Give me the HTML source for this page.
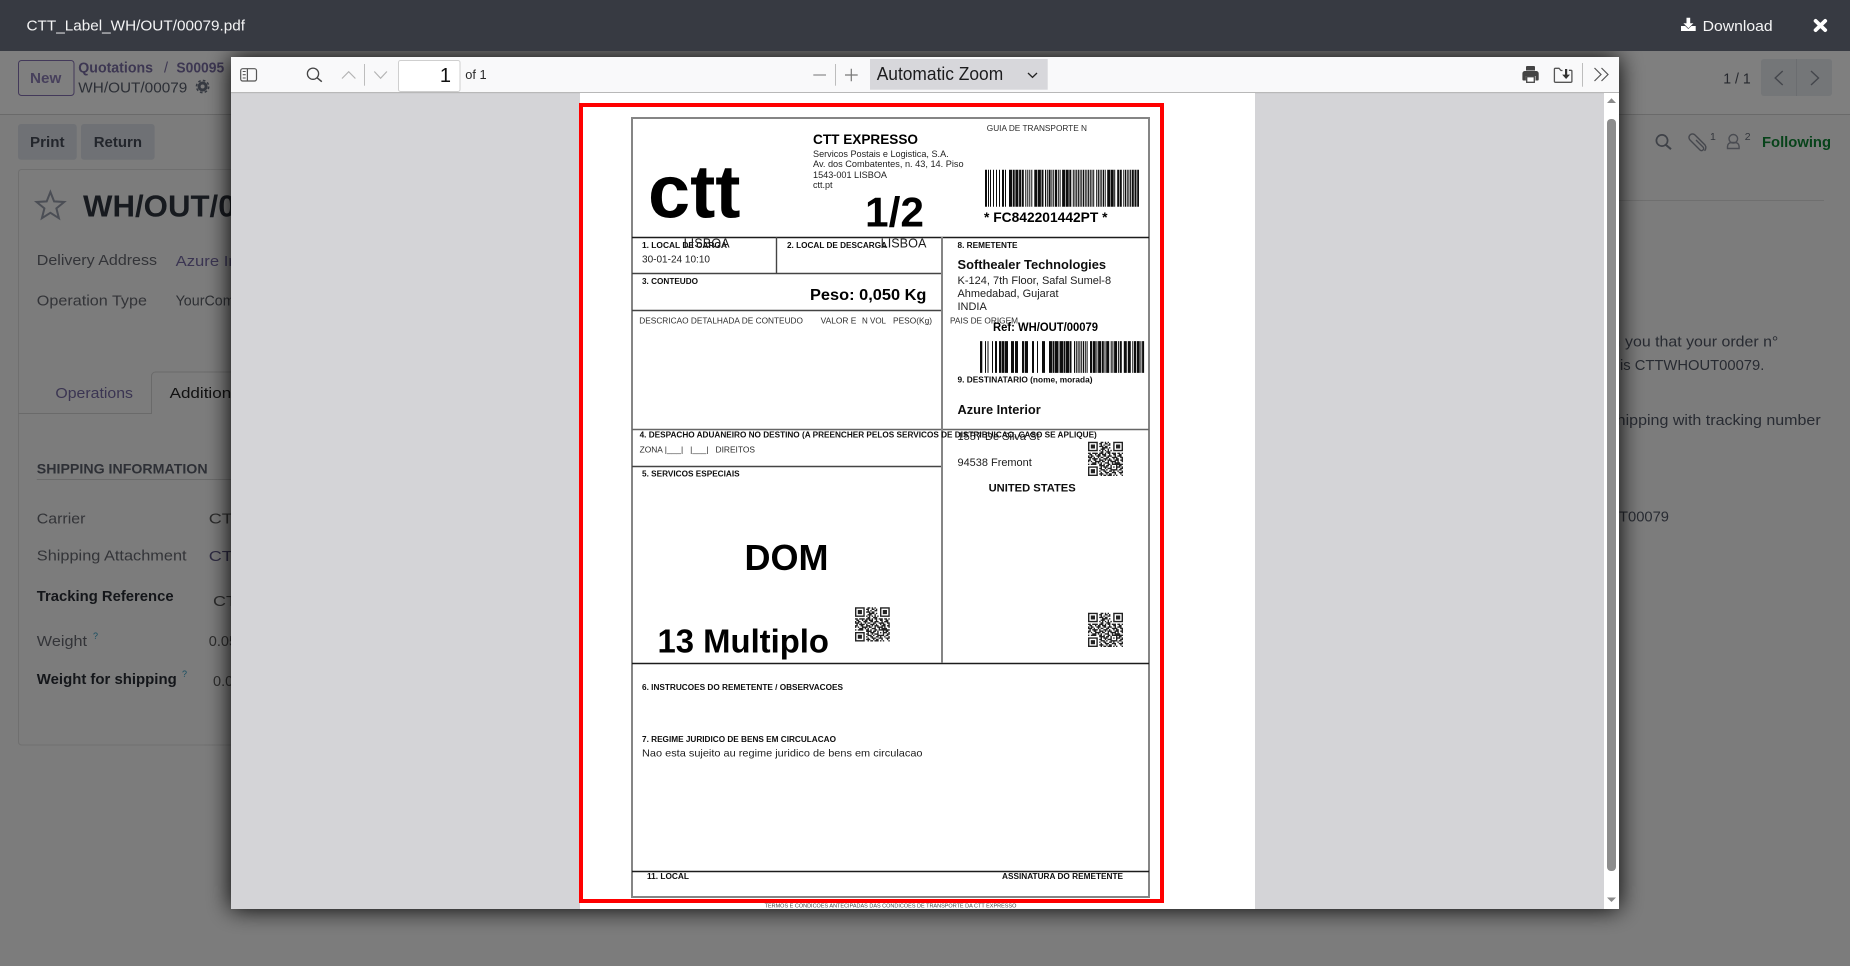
<!DOCTYPE html>
<html><head><meta charset="utf-8"><title>CTT_Label_WH/OUT/00079.pdf</title>
<style>
html,body{margin:0;padding:0;background:#7c7c7c;width:1850px;height:966px;overflow:hidden}
svg{display:block;position:absolute;left:0;top:0}
text{font-family:"Liberation Sans",sans-serif;white-space:pre}
.b{font-weight:700}
.bg{font-size:14.5px;fill:#333438}
.l{font-size:8px;font-weight:700;fill:#111}
.r8{font-size:8px;fill:#2c2c2c}
.r{fill:#1f1f1f}
</style></head><body>
<svg width="1850" height="966" viewBox="0 0 1850 966" xmlns="http://www.w3.org/2000/svg">
<defs>
<filter id="sh" filterUnits="userSpaceOnUse" x="150" y="0" width="1550" height="966"><feGaussianBlur stdDeviation="12"/></filter>
<filter id="sb" x="-5%" y="-5%" width="110%" height="110%"><feGaussianBlur stdDeviation="0.25"/></filter>
<path id="qr" fill="none" stroke="#222" stroke-width="1" d="M0 .5h7M9 .5h2M12 .5h1M14 .5h1M18 .5h7M0 1.5h1M6 1.5h1M8 1.5h2M12 1.5h2M15 1.5h1M18 1.5h1M24 1.5h1M0 2.5h1M2 2.5h3M6 2.5h1M9 2.5h1M11 2.5h1M14 2.5h2M18 2.5h1M20 2.5h3M24 2.5h1M0 3.5h1M2 3.5h3M6 3.5h1M8 3.5h3M12 3.5h2M18 3.5h1M20 3.5h3M24 3.5h1M0 4.5h1M2 4.5h3M6 4.5h1M10 4.5h4M15 4.5h1M18 4.5h1M20 4.5h3M24 4.5h1M0 5.5h1M6 5.5h1M9 5.5h3M14 5.5h1M18 5.5h1M24 5.5h1M0 6.5h7M8 6.5h1M10 6.5h1M12 6.5h1M14 6.5h1M16 6.5h1M18 6.5h7M9 7.5h2M13 7.5h3M0 8.5h2M3 8.5h4M8 8.5h3M12 8.5h1M14 8.5h2M17 8.5h3M21 8.5h2M24 8.5h1M1 9.5h2M5 9.5h1M7 9.5h2M10 9.5h3M15 9.5h1M18 9.5h2M22 9.5h2M0 10.5h1M2 10.5h2M6 10.5h3M11 10.5h2M14 10.5h3M19 10.5h1M21 10.5h3M0 11.5h3M4 11.5h1M7 11.5h1M9 11.5h2M13 11.5h2M17 11.5h4M23 11.5h2M1 12.5h1M3 12.5h3M6 12.5h1M8 12.5h1M11 12.5h3M15 12.5h1M18 12.5h1M20 12.5h2M24 12.5h1M0 13.5h2M4 13.5h2M8 13.5h3M12 13.5h1M14 13.5h3M19 13.5h3M23 13.5h2M0 14.5h1M2 14.5h1M5 14.5h4M10 14.5h2M14 14.5h1M16 14.5h4M21 14.5h1M24 14.5h1M3 15.5h3M7 15.5h1M9 15.5h1M12 15.5h3M17 15.5h1M19 15.5h4M0 16.5h1M2 16.5h4M8 16.5h2M11 16.5h1M14 16.5h2M17 16.5h8M8 17.5h4M13 17.5h2M16 17.5h1M20 17.5h1M22 17.5h2M0 18.5h7M9 18.5h1M11 18.5h3M16 18.5h1M18 18.5h1M20 18.5h3M24 18.5h1M0 19.5h1M6 19.5h1M8 19.5h2M12 19.5h1M14 19.5h3M20 19.5h1M23 19.5h2M0 20.5h1M2 20.5h3M6 20.5h1M9 20.5h3M13 20.5h1M16 20.5h5M22 20.5h2M0 21.5h1M2 21.5h3M6 21.5h1M8 21.5h1M11 21.5h2M15 21.5h2M18 21.5h1M21 21.5h1M24 21.5h1M0 22.5h1M2 22.5h3M6 22.5h1M9 22.5h1M12 22.5h3M17 22.5h3M22 22.5h3M0 23.5h1M6 23.5h1M8 23.5h3M13 23.5h1M15 23.5h2M19 23.5h1M23 23.5h1M0 24.5h7M9 24.5h1M11 24.5h2M14 24.5h3M18 24.5h1M20 24.5h1M24 24.5h1"/>
</defs>

<!-- background app -->
<rect width="1850" height="966" fill="#7c7c7c"/>
<rect y="51" width="1850" height="63" fill="#7f7f7f"/>
<rect y="114" width="1850" height="1" fill="#6a6a6a"/>
<rect x="18.5" y="60.5" width="55.5" height="35" rx="3" fill="none" stroke="#43395a"/>
<text class="b" x="30" y="83" font-size="15" fill="#47405c" textLength="31.3" lengthAdjust="spacingAndGlyphs">New</text>
<text class="b" x="78.3" y="72.3" font-size="14.5" fill="#3d3752" textLength="74.7" lengthAdjust="spacingAndGlyphs">Quotations</text>
<text x="164" y="72.3" font-size="14.5" fill="#3d3752">/</text>
<text class="b" x="176.4" y="72.3" font-size="14.5" fill="#3d3752" textLength="47.8" lengthAdjust="spacingAndGlyphs">S00095</text>
<text x="78.3" y="92.3" font-size="14.5" fill="#2c2f36" textLength="109" lengthAdjust="spacingAndGlyphs">WH/OUT/00079</text>
<circle cx="202.6" cy="86.5" r="5" fill="#363a42"/><circle cx="202.6" cy="86.5" r="6.1" fill="none" stroke="#363a42" stroke-width="1.6" stroke-dasharray="2.6 2.2"/><circle cx="202.6" cy="86.5" r="2" fill="#7c7c7c"/>
<rect x="18" y="124" width="58.7" height="35.7" rx="3" fill="#6f7175"/>
<rect x="81" y="124" width="73.6" height="35.7" rx="3" fill="#6f7175"/>
<text class="b" x="30" y="147" font-size="15" fill="#23262c" textLength="34.5" lengthAdjust="spacingAndGlyphs">Print</text>
<text class="b" x="93.7" y="147" font-size="15" fill="#23262c" textLength="48.3" lengthAdjust="spacingAndGlyphs">Return</text>
<rect x="18.5" y="169.5" width="1000" height="575.5" rx="3" fill="none" stroke="#6f6f6f"/>
<polygon points="50.4,192 54.1,201.4 64.2,202 56.4,208.4 58.9,218.2 50.4,212.8 41.9,218.2 44.4,208.4 36.6,202 46.7,201.4" fill="none" stroke="#4b4e55" stroke-width="2"/>
<text class="b" x="83" y="216.7" font-size="31" fill="#171a1f" textLength="222" lengthAdjust="spacingAndGlyphs">WH/OUT/00079</text>
<text class="bg" x="36.8" y="265" textLength="120.2" lengthAdjust="spacingAndGlyphs">Delivery Address</text>
<text class="bg" x="175.6" y="266" style="fill:#3b3552" textLength="100" lengthAdjust="spacingAndGlyphs">Azure Interior</text>
<text class="bg" x="36.8" y="305.7" textLength="110.2" lengthAdjust="spacingAndGlyphs">Operation Type</text>
<text class="bg" x="175.6" y="305.7" style="fill:#2e3034" textLength="90" lengthAdjust="spacingAndGlyphs">YourCompany</text>
<path d="M18.5 413.5H151.5V376a4 4 0 0 1 4-4H400" fill="none" stroke="#6a6a6a"/>
<text class="bg" x="55.4" y="398" style="fill:#3b3552" textLength="77.6" lengthAdjust="spacingAndGlyphs">Operations</text>
<text class="bg" x="169.6" y="398" style="fill:#111" textLength="108" lengthAdjust="spacingAndGlyphs">Additional Info</text>
<text class="b" x="36.8" y="473.3" font-size="14" fill="#2e3036" textLength="170.8" lengthAdjust="spacingAndGlyphs">SHIPPING INFORMATION</text>
<rect x="36.8" y="479" width="300" height="1" fill="#6a6a6a"/>
<text class="bg" x="36.8" y="523.3" textLength="48.6" lengthAdjust="spacingAndGlyphs">Carrier</text>
<text class="bg" x="208.8" y="523.3" style="fill:#2c2c2c" textLength="35" lengthAdjust="spacingAndGlyphs">CTT</text>
<text class="bg" x="36.8" y="560.7" textLength="149.8" lengthAdjust="spacingAndGlyphs">Shipping Attachment</text>
<text class="bg" x="208.8" y="561" style="fill:#2e2b42" textLength="35" lengthAdjust="spacingAndGlyphs">CTT</text>
<text class="bg b" x="36.8" y="601" style="fill:#14161a" textLength="136.8" lengthAdjust="spacingAndGlyphs">Tracking Reference</text>
<text class="bg" x="213" y="606" style="fill:#2c2c2c" textLength="35" lengthAdjust="spacingAndGlyphs">CTT</text>
<text class="bg" x="36.8" y="646" textLength="50.2" lengthAdjust="spacingAndGlyphs">Weight</text>
<text x="93" y="639" font-size="9" fill="#174e62">?</text>
<text class="bg" x="208.8" y="646" style="fill:#2c2c2c">0.05</text>
<text class="bg b" x="36.8" y="684" style="fill:#14161a" textLength="139.9" lengthAdjust="spacingAndGlyphs">Weight for shipping</text>
<text x="182" y="677" font-size="9" fill="#174e62">?</text>
<text class="bg" x="213" y="686" style="fill:#2c2c2c">0.05</text>

<!-- right side -->
<text x="1723.3" y="83.3" font-size="14.5" fill="#26282e" textLength="27.4" lengthAdjust="spacingAndGlyphs">1 / 1</text>
<rect x="1761" y="59" width="71" height="37" rx="3" fill="#747678"/>
<rect x="1796" y="59" width="1" height="37" fill="#6b6d70"/>
<path d="M1782.7 71l-7.5 7 7.5 7M1811 71l7.5 7-7.5 7" fill="none" stroke="#44464c" stroke-width="1.4"/>
<circle cx="1662" cy="140.5" r="5.6" fill="none" stroke="#3f4248" stroke-width="1.7"/><path d="M1666 145l5 4.2" stroke="#3f4248" stroke-width="2"/>
<path d="M1696 140l7 7a2 2 0 0 1-3 3l-10-10a3.4 3.4 0 0 1 5-5l10 10a4.4 4.4 0 0 1-.5 5.8" fill="none" stroke="#45474d" stroke-width="1.4"/>
<text x="1710" y="140" font-size="10.5" fill="#33363c">1</text>
<circle cx="1733.3" cy="138.8" r="4.3" fill="none" stroke="#4a4c52" stroke-width="1.4"/><path d="M1727.5 148.5v-2a4 4 0 0 1 4-4h3.6a4 4 0 0 1 4 4v2z" fill="none" stroke="#4a4c52" stroke-width="1.4"/>
<text x="1744.7" y="140" font-size="10.5" fill="#33363c">2</text>
<text class="b" x="1762" y="147" font-size="14.5" fill="#07431a" textLength="69" lengthAdjust="spacingAndGlyphs">Following</text>
<rect x="1619" y="200" width="205" height="1" fill="#6f6f6f"/>
<text class="bg" x="1612" y="346.7" style="fill:#282b32">n </text>
<text class="bg" x="1625" y="346.7" style="fill:#282b32" textLength="153.3" lengthAdjust="spacingAndGlyphs">you that your order n°</text>
<text class="bg" x="1620" y="370" style="fill:#282b32" textLength="144.3" lengthAdjust="spacingAndGlyphs">is CTTWHOUT00079.</text>
<text class="bg" x="1616.7" y="425" style="fill:#282b32" textLength="204" lengthAdjust="spacingAndGlyphs">hipping with tracking number</text>
<text class="bg" x="1619" y="521.7" style="fill:#282b32" textLength="50" lengthAdjust="spacingAndGlyphs">T00079</text>

<!-- modal shadow -->
<rect x="231" y="57" width="1388" height="852" fill="#000" filter="url(#sh)"/>

<!-- header -->
<rect width="1850" height="51" fill="#373a42"/>
<text x="26.5" y="30.5" font-size="14.5" fill="#f4f4f5" textLength="218.5" lengthAdjust="spacingAndGlyphs">CTT_Label_WH/OUT/00079.pdf</text>
<path d="M1686.5 17.7h3.7v5.5h3.2l-5 5-5-5h3.1z" fill="#fff"/>
<path d="M1681 26h4.2l3.1 3 3.1-3h4.3v5h-14.7z" fill="#fff"/>
<text x="1702.7" y="31" font-size="14.5" fill="#f4f4f5" textLength="70" lengthAdjust="spacingAndGlyphs">Download</text>
<path d="M1815.6 20.9l9.6 9.2M1825.2 20.9l-9.6 9.2" stroke="#fff" stroke-width="3.8" stroke-linecap="round"/>

<!-- modal -->
<rect x="231" y="57" width="1388" height="852" fill="#d4d4d7"/>
<rect x="231" y="57" width="1388" height="35" fill="#f9f9fa"/>
<rect x="231" y="92" width="1388" height="1.2" fill="#b8b8b8"/>
<!-- toolbar left -->
<rect x="240.7" y="68.7" width="15.8" height="12.3" rx="2" fill="none" stroke="#555" stroke-width="1.2"/>
<path d="M247.4 68.7v12.3" stroke="#555" stroke-width="1.2"/>
<path d="M242.7 71.5h3M242.7 74.7h3M242.7 78h3" stroke="#555" stroke-width="1.1"/>
<circle cx="313" cy="73.7" r="5.6" fill="none" stroke="#444" stroke-width="1.3"/><path d="M317 77.7l4.8 4" stroke="#444" stroke-width="1.5"/>
<path d="M342 78.5l6.7-6.8 6.7 6.8" fill="none" stroke="#b4b4b4" stroke-width="1.2"/>
<rect x="364" y="64" width="1" height="21.7" fill="#bdbdbd"/>
<path d="M374.3 71.5l6.3 6.8 6.3-6.8" fill="none" stroke="#b4b4b4" stroke-width="1.2"/>
<rect x="398.5" y="60.5" width="61.5" height="31" rx="2" fill="#fff" stroke="#cfcfcf"/>
<text x="451" y="82" font-size="20" fill="#111" text-anchor="end">1</text>
<text x="465.3" y="79" font-size="13" fill="#2a2a2a" textLength="21.4" lengthAdjust="spacingAndGlyphs">of 1</text>
<!-- toolbar center -->
<path d="M813.3 75h12.7" stroke="#8a8a8a" stroke-width="1.2"/>
<rect x="835" y="64" width="1" height="21.7" fill="#bdbdbd"/>
<path d="M845 75h12.7M851.3 68.7v12.6" stroke="#777" stroke-width="1.2"/>
<rect x="870" y="59" width="177.7" height="30.7" fill="#d7d7db"/>
<text x="876.7" y="80" font-size="18" fill="#1c1c1e" textLength="126.5" lengthAdjust="spacingAndGlyphs">Automatic Zoom</text>
<path d="M1028 73l4.5 4.3 4.5-4.3" fill="none" stroke="#222" stroke-width="1.3"/>
<!-- toolbar right -->
<path d="M1526 70.5v-3.5a1 1 0 0 1 1-1h7a1 1 0 0 1 1 1v3.5z" fill="#444"/>
<path d="M1522.4 73.5a2.5 2.5 0 0 1 2.5-2.5h11.3a2.5 2.5 0 0 1 2.5 2.5v6a1 1 0 0 1-1 1h-2.2v-4.5h-9.6v4.5h-2.5a1 1 0 0 1-1-1z" fill="#444"/>
<rect x="1526.7" y="76.7" width="7.6" height="5.6" fill="#fff" stroke="#444" stroke-width="1.3"/>
<path d="M1562.5 70.5h-1.5l-2-2.2h-3.6a1 1 0 0 0-1 1v12a1 1 0 0 0 1 1h15.5a1 1 0 0 0 1-1v-10a1 1 0 0 0-1-1h-2" fill="none" stroke="#555" stroke-width="1.3"/>
<path d="M1565 69h2.2v5.6h2.8l-3.9 4.4-3.9-4.4h2.8z" fill="#333"/>
<rect x="1582" y="63" width="1" height="23.7" fill="#bdbdbd"/>
<path d="M1594.5 68l6.5 6.5-6.5 6.5M1601.5 68l6.5 6.5-6.5 6.5" fill="none" stroke="#555" stroke-width="1.2"/>

<!-- pdf page -->
<rect x="580" y="93" width="675" height="816" fill="#fff"/>
<text x="764.6" y="907.7" font-size="5.5" fill="#444" textLength="251.8" lengthAdjust="spacingAndGlyphs" filter="url(#sb)">TERMOS E CONDICOES ANTECIPADAS DAS CONDICOES DE TRANSPORTE DA CTT EXPRESSO</text>
<!-- red box -->
<rect x="581" y="105" width="581" height="796" fill="none" stroke="#f00" stroke-width="4"/>
<!-- label frame -->
<g fill="none">
<rect x="632" y="118" width="517" height="779" stroke="#858585" stroke-width="2"/>
<path d="M632 237.5H1149M632 663.5H1149M632 871.5H1149" stroke="#1c1c1c" stroke-width="1.4"/>
<path d="M632 273.5H942M632 310.5H942M632 466.5H942" stroke="#444" stroke-width="1.6"/>
<path d="M632 429.5H1149" stroke="#666" stroke-width="1.6"/>
<path d="M776.5 237V274" stroke="#444" stroke-width="1.4"/>
<path d="M942 237V663" stroke="#858585" stroke-width="2"/>
</g>
<g filter="url(#sb)">
<text class="b" x="648" y="217.7" font-size="75" fill="#000" textLength="92.5" lengthAdjust="spacingAndGlyphs">ctt</text>
<text class="b" x="813" y="144" font-size="13.5" fill="#000" textLength="105" lengthAdjust="spacingAndGlyphs">CTT EXPRESSO</text>
<text class="r" x="813" y="157" font-size="9.5" textLength="135.7" lengthAdjust="spacingAndGlyphs">Servicos Postais e Logistica, S.A.</text>
<text class="r" x="813" y="167" font-size="9.5" textLength="150.6" lengthAdjust="spacingAndGlyphs">Av. dos Combatentes, n. 43, 14. Piso</text>
<text class="r" x="813" y="178" font-size="9.5" textLength="74" lengthAdjust="spacingAndGlyphs">1543-001 LISBOA</text>
<text class="r" x="813" y="188" font-size="9.5" textLength="19.5" lengthAdjust="spacingAndGlyphs">ctt.pt</text>
<text class="r8" x="986.8" y="131" textLength="100.2" lengthAdjust="spacingAndGlyphs">GUIA DE TRANSPORTE N</text>
<text class="b" x="865" y="226.7" font-size="42" fill="#000" textLength="59" lengthAdjust="spacingAndGlyphs">1/2</text>
<line x1="985" y1="188.3" x2="1139" y2="188.3" stroke="#111" stroke-width="37" stroke-dasharray="2 1 1 1 1 2 1 2 1 2 1 2 2 1 1 3 3 .7 2 .7 3 .7 2 .7 2 1.5 1 1 1 1 1 1 1 2 3 .6 3 .6 2 1.5 1 .8 1 .8 2 .8 1 .8 1 .8 2 .8 1 .8 1 1.5 3 .6 3 .6 2 1.5 1 .7 1 .7 1 .7 1 .7 1 .7 1 .7 1 .7 1 .7 1 .7 1 .7 1 .7 1 .7 1 2 1 .7 1 .7 1 .7 1 .7 1 .7 1 1.5 3 .5 3 .5 1 2 2 .6 2 1.5 1 .7 1 .7 1 .7 1 .7 1 .7 2 .7 2 .7 2 9"/>
<text class="b" x="984" y="222" font-size="13.5" fill="#000" textLength="123.5" lengthAdjust="spacingAndGlyphs">* FC842201442PT *</text>

<text class="l" x="642" y="248" textLength="85" lengthAdjust="spacingAndGlyphs">1. LOCAL DE CARGA</text>
<text class="r" x="683.6" y="247.7" font-size="12.5" textLength="46" lengthAdjust="spacingAndGlyphs">LISBOA</text>
<text class="r" x="642" y="262.7" font-size="10" textLength="68" lengthAdjust="spacingAndGlyphs">30-01-24 10:10</text>
<text class="l" x="787" y="248" textLength="100" lengthAdjust="spacingAndGlyphs">2. LOCAL DE DESCARGA</text>
<text class="r" x="880.7" y="247.7" font-size="12.5" textLength="45.7" lengthAdjust="spacingAndGlyphs">LISBOA</text>
<text class="l" x="957.5" y="248" textLength="60" lengthAdjust="spacingAndGlyphs">8. REMETENTE</text>
<text class="b" x="957.5" y="269" font-size="12.5" fill="#111" textLength="148.6" lengthAdjust="spacingAndGlyphs">Softhealer Technologies</text>
<text class="r" x="957.5" y="284" font-size="11" textLength="153.6" lengthAdjust="spacingAndGlyphs">K-124, 7th Floor, Safal Sumel-8</text>
<text class="r" x="957.5" y="297" font-size="11" textLength="101" lengthAdjust="spacingAndGlyphs">Ahmedabad, Gujarat</text>
<text class="r" x="957.5" y="310" font-size="11" textLength="29.3" lengthAdjust="spacingAndGlyphs">INDIA</text>
<text class="l" x="642" y="284" textLength="56" lengthAdjust="spacingAndGlyphs">3. CONTEUDO</text>
<text class="b" x="810" y="300" font-size="16" fill="#000" textLength="116.4" lengthAdjust="spacingAndGlyphs">Peso: 0,050 Kg</text>
<text class="r8" x="639.3" y="323.3" textLength="163.7" lengthAdjust="spacingAndGlyphs">DESCRICAO DETALHADA DE CONTEUDO</text>
<text class="r8" x="820.7" y="323.3" textLength="35.7" lengthAdjust="spacingAndGlyphs">VALOR E</text>
<text class="r8" x="862" y="323.3" textLength="24" lengthAdjust="spacingAndGlyphs">N VOL</text>
<text class="r8" x="893" y="323.3" textLength="39" lengthAdjust="spacingAndGlyphs">PESO(Kg)</text>
<text class="r8" x="950" y="323.3" textLength="68" lengthAdjust="spacingAndGlyphs">PAIS DE ORIGEM</text>
<text class="b" x="993" y="331" font-size="11.5" fill="#000" textLength="105" lengthAdjust="spacingAndGlyphs">Ref: WH/OUT/00079</text>
<line x1="980" y1="357" x2="1145" y2="357" stroke="#111" stroke-width="31.7" stroke-dasharray="2.3 2.7 1 1.5 1 3.5 1 2 2 2 2 .5 3 .5 3 3 3 1 3 4 2 .7 3.3 4 2 3 1 4 3 4 3 .5 2 .5 3 .5 1 .5 3 .5 2 .5 3 .5 2 2.5 1 .8 1 .8 1 .8 1 .8 1 .8 1 .8 1 .8 1 2.4 2 .7 3 .7 1 .7 3 .7 2 .7 1 .7 3 1.5 1 .7 1 .7 3 1 1 .7 2 2 3 1 3 1.5 1 .7 2 .7 3 .7 1 .7 2 9"/>
<text class="l" x="957.5" y="382.7" textLength="135" lengthAdjust="spacingAndGlyphs">9. DESTINATARIO (nome, morada)</text>
<text class="b" x="957.5" y="414" font-size="12.5" fill="#111" textLength="83.2" lengthAdjust="spacingAndGlyphs">Azure Interior</text>
<text class="r" x="957.5" y="440" font-size="11" textLength="82" lengthAdjust="spacingAndGlyphs">1557 De Silva St</text>
<text class="l" x="639.6" y="437.7" textLength="457.2" lengthAdjust="spacingAndGlyphs">4. DESPACHO ADUANEIRO NO DESTINO (A PREENCHER PELOS SERVICOS DE DISTRIBUICAO, CASO SE APLIQUE)</text>
<text class="r8" x="639.6" y="452.7" textLength="115.4" lengthAdjust="spacingAndGlyphs">ZONA |___|   |___|   DIREITOS</text>
<text class="r" x="957.5" y="466" font-size="11" textLength="74.3" lengthAdjust="spacingAndGlyphs">94538 Fremont</text>
<text class="b" x="988.6" y="491.7" font-size="11" fill="#111" textLength="87.1" lengthAdjust="spacingAndGlyphs">UNITED STATES</text>
<text class="l" x="642" y="476.7" textLength="97.6" lengthAdjust="spacingAndGlyphs">5. SERVICOS ESPECIAIS</text>
<text class="b" x="744.5" y="570" font-size="36" fill="#000" textLength="84" lengthAdjust="spacingAndGlyphs">DOM</text>
<text class="b" x="657.5" y="652.3" font-size="33" fill="#000" textLength="171.5" lengthAdjust="spacingAndGlyphs">13 Multiplo</text>
<use href="#qr" transform="translate(1088 441.7) scale(1.4 1.37)"/>
<use href="#qr" transform="translate(855 607.3) scale(1.39 1.37)"/>
<use href="#qr" transform="translate(1088 612.7) scale(1.4 1.37)"/>
<text class="l" x="642" y="690" textLength="201" lengthAdjust="spacingAndGlyphs">6. INSTRUCOES DO REMETENTE / OBSERVACOES</text>
<text class="l" x="642" y="742" textLength="194" lengthAdjust="spacingAndGlyphs">7. REGIME JURIDICO DE BENS EM CIRCULACAO</text>
<text class="r" x="642" y="756.7" font-size="10.5" textLength="280.5" lengthAdjust="spacingAndGlyphs">Nao esta sujeito au regime juridico de bens em circulacao</text>
<text class="l" x="647" y="879" textLength="42" lengthAdjust="spacingAndGlyphs">11. LOCAL</text>
<text class="l" x="1002" y="879" textLength="121" lengthAdjust="spacingAndGlyphs">ASSINATURA DO REMETENTE</text>
</g>

<!-- scrollbar -->
<rect x="1604" y="93" width="15" height="816" fill="#fff"/>
<polygon points="1607,103 1616,103 1611.5,98.3" fill="#8a8a8a"/>
<rect x="1607" y="119" width="9" height="752" rx="4" fill="#8c8c8c"/>
<polygon points="1607,897.5 1616,897.5 1611.5,902" fill="#8a8a8a"/>
</svg>
</body></html>
